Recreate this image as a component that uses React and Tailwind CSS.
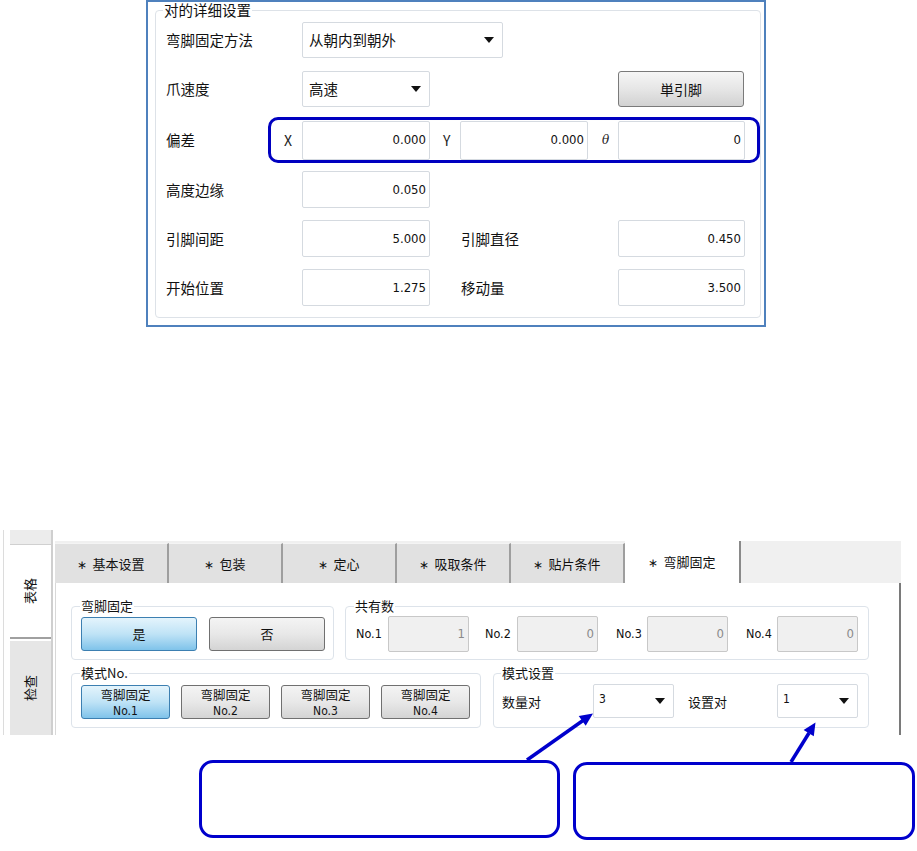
import React from 'react';

const cjk = "font-['Noto_Sans_CJK_SC',sans-serif]";
const num = "font-['DejaVu_Sans_Condensed','Liberation_Sans_Narrow',sans-serif]";

const Caret = () => (
    <svg width="10" height="6" viewBox="0 0 10 6"><path d="M0 0h10L5 6z" fill="#111" /></svg>
);

const NumBox = ({ value, w = 'w-[128px]', h = 'h-[37px]' }) => (
    <div className={`${w} ${h} bg-white border border-[#d5dae0] rounded-[2px] flex items-center justify-end pr-[3px] text-[13px] text-[#111] ${num}`}>
        {value}
    </div>
);

const Select = ({ value, w }) => (
    <div className={`${w} h-[36px] bg-white border border-[#d5dae0] rounded-[2px] flex items-center justify-between pl-[6px] pr-[8px] text-[14.5px] text-[#111]`}>
        <span>{value}</span>
        <Caret />
    </div>
);

const Label = ({ children, w }) => (
    <div className={`${w} shrink-0 text-[14.5px] text-[#111]`}>{children}</div>
);

const DetailPanel = () => (
    <div className={`ml-[146px] w-[620px] h-[327px] border-2 border-[#4f81bd] pl-[7px] pr-[8px] ${cjk}`}>
        <fieldset className="h-[316px] border border-[#dde2e8] rounded-[4px] pl-[7px]">
            <legend className="px-[1px] text-[14.5px] leading-[16px] text-[#111]">对的详细设置</legend>
            <div className="pl-[3px] flex flex-col">
                <div className="mt-[4px] flex items-center">
                    <Label w="w-[136px]">弯脚固定方法</Label>
                    <Select value="从朝内到朝外" w="w-[201px]" />
                </div>
                <div className="mt-[13px] flex items-center">
                    <Label w="w-[136px]">爪速度</Label>
                    <Select value="高速" w="w-[128px]" />
                    <button className="ml-[188px] w-[126px] h-[36px] rounded-[3px] border border-[#7a7a7a] bg-linear-to-b from-[#f6f6f6] via-[#e6e6e6] to-[#d2d2d2] text-[14px] text-[#111]">単引脚</button>
                </div>
                <div className="mt-[10px] flex items-center">
                    <Label w="w-[102px]">偏差</Label>
                    <div className="w-[492px] h-[46px] border-[3px] border-[#0000c0] rounded-[10px] flex items-center pl-[13px] text-[14px] text-[#222]">
                        <span className="w-[18px]">X</span>
                        <NumBox value="0.000" h="h-[39px]" />
                        <span className="ml-[13px] w-[17px]">Y</span>
                        <NumBox value="0.000" h="h-[39px]" />
                        <span className="ml-[14px] w-[16px] italic font-['DejaVu_Serif',serif] text-[12px]">θ</span>
                        <NumBox value="0" w="w-[127px]" h="h-[39px]" />
                    </div>
                </div>
                <div className="mt-[8px] flex items-center">
                    <Label w="w-[136px]">高度边缘</Label>
                    <NumBox value="0.050" />
                </div>
                <div className="mt-[12px] flex items-center">
                    <Label w="w-[136px]">引脚间距</Label>
                    <NumBox value="5.000" />
                    <div className="ml-[31px] w-[157px] text-[14.5px] text-[#111]">引脚直径</div>
                    <NumBox value="0.450" w="w-[127px]" />
                </div>
                <div className="mt-[12px] flex items-center">
                    <Label w="w-[136px]">开始位置</Label>
                    <NumBox value="1.275" />
                    <div className="ml-[31px] w-[157px] text-[14.5px] text-[#111]">移动量</div>
                    <NumBox value="3.500" w="w-[127px]" />
                </div>
            </div>
        </fieldset>
    </div>
);

const tabs = ['基本设置', '包装', '定心', '吸取条件', '贴片条件'];

const WinButton = ({ active, w, h, children }) => (
    <div className={`${w} ${h} shrink-0 rounded-[3px] border flex flex-col items-center justify-center leading-[16px] text-[13px] text-[#111] ${active ? 'border-[#3c7fb1] bg-linear-to-b from-[#e4f4fc] via-[#bfe3f6] to-[#7fc3ea]' : 'border-[#707070] bg-linear-to-b from-[#f4f4f4] via-[#e8e8e8] to-[#d4d4d4]'}`}>
        {children}
    </div>
);

const Disabled = ({ value }) => (
    <div className={`w-[81px] h-[36px] shrink-0 bg-[#f0f0f0] border border-[#c8c8c8] rounded-[2px] flex items-center justify-end pr-[3px] text-[13px] text-[#8a8a8a] ${num}`}>{value}</div>
);

const SmallSelect = ({ value }) => (
    <div className="w-[81px] h-[34px] shrink-0 bg-white border border-[#d5dae0] rounded-[2px] flex items-start justify-between pl-[5px] pr-[8px] pt-[5px]">
        <span className={`text-[12px] text-[#111] ${num}`}>{value}</span>
        <span className="mt-[8px]"><Caret /></span>
    </div>
);

const Group = ({ title, w, h, pl = 'pl-[8px]', children }) => (
    <fieldset className={`${w} ${h} shrink-0 border border-[#dde3ea] rounded-[4px] ${pl}`}>
        <legend className="px-[1px] text-[13px] leading-[16px] text-[#111]">{title}</legend>
        {children}
    </fieldset>
);

const BendScreen = () => (
    <div className={`mt-[203px] h-[205px] overflow-hidden flex ${cjk}`}>
        <div className="w-[3px] shrink-0" />
        <div className="w-px shrink-0 bg-[#dcdcdc]" />
        <div className="w-[6px] shrink-0" />
        <div className="w-[43px] shrink-0 flex flex-col border-r-2 border-[#cfcfcf]">
            <div className="h-[18px] bg-[#ececec] border-b border-[#d0d0d0]" />
            <div className="h-[114px] bg-white border-b-2 border-[#a0a0a0] flex items-center justify-center">
                <span className="-rotate-90 whitespace-nowrap text-[13px] leading-[14px] text-[#111]">表格</span>
            </div>
            <div className="h-[114px] mt-[2px] bg-[#e6e6e6] flex items-center justify-center">
                <span className="-rotate-90 whitespace-nowrap text-[13px] leading-[14px] text-[#111]">检查</span>
            </div>
        </div>
        <div className="w-[2px] shrink-0" />
        <div className="w-[846px] shrink-0 flex flex-col">
            <div className="mt-[11px] h-[42px] bg-[#f0f0f0] flex items-end">
                {tabs.map((t) => (
                    <div key={t} className="w-[114px] h-[40px] shrink-0 bg-[#e1e1e1] border-t border-[#f4f4f4] border-r-2 border-r-[#9e9e9e] flex items-center justify-center text-[13px] text-[#111]">
                        <span className="mr-[5px] text-[12px]">∗</span>{t}
                    </div>
                ))}
                <div className="w-[116px] h-[42px] shrink-0 bg-white border-r-2 border-[#8a8a8a] flex items-center justify-center text-[13px] text-[#111]">
                    <span className="mr-[5px] text-[12px]">∗</span>弯脚固定
                </div>
            </div>
            <div className="flex-1 bg-white border-l border-[#d8d8d8] border-r-2 border-r-[#7a7a7a] pl-[15px]">
                <div className="mt-[15px] flex">
                    <Group title="弯脚固定" w="w-[263px]" h="h-[62px]">
                        <div className="mt-[3px] pl-[1px] flex gap-[12px]">
                            <WinButton active w="w-[116px]" h="h-[34px]">是</WinButton>
                            <WinButton w="w-[116px]" h="h-[34px]">否</WinButton>
                        </div>
                    </Group>
                    <div className="w-[11px] shrink-0" />
                    <Group title="共有数" w="w-[524px]" h="h-[62px]">
                        <div className="mt-[2px] pl-[2px] flex items-center text-[13px] text-[#111]">
                            <span className={`w-[32px] shrink-0 ${num} text-[12.5px]`}>No.1</span>
                            <Disabled value="1" />
                            <span className={`ml-[16px] w-[32px] shrink-0 ${num} text-[12.5px]`}>No.2</span>
                            <Disabled value="0" />
                            <span className={`ml-[18px] w-[31px] shrink-0 ${num} text-[12.5px]`}>No.3</span>
                            <Disabled value="0" />
                            <span className={`ml-[18px] w-[31px] shrink-0 ${num} text-[12.5px]`}>No.4</span>
                            <Disabled value="0" />
                        </div>
                    </Group>
                </div>
                <div className="mt-[5px] flex">
                    <Group title="模式No." w="w-[410px]" h="h-[63px]">
                        <div className="mt-[4px] pl-[1px] flex gap-[11px]">
                            {[1, 2, 3, 4].map((n) => (
                                <WinButton key={n} active={n === 1} w="w-[89px]" h="h-[34px]">
                                    <span className="text-[12.5px] leading-[18px]">弯脚固定</span>
                                    <span className={`${num} text-[12px] leading-[14px]`}>No.{n}</span>
                                </WinButton>
                            ))}
                        </div>
                    </Group>
                    <div className="w-[12px] shrink-0" />
                    <Group title="模式设置" w="w-[376px]" h="h-[63px]" pl="pl-[7px]">
                        <div className="mt-[3px] pl-[1px] flex items-center text-[13px] text-[#111]">
                            <span className="w-[91px] shrink-0 mt-[2px]">数量对</span>
                            <SmallSelect value="3" />
                            <span className="ml-[14px] w-[89px] shrink-0 mt-[2px]">设置对</span>
                            <SmallSelect value="1" />
                        </div>
                    </Group>
                </div>
            </div>
        </div>
    </div>
);

const Arrows = () => (
    <svg className="absolute left-0 top-0 pointer-events-none" width="917" height="851" viewBox="0 0 917 851">
        <line x1="527" y1="760" x2="583" y2="720.5" stroke="#0000cc" strokeWidth="3.5" />
        <polygon points="593,713.5 585.7,725.8 578.7,716" fill="#0000cc" />
        <line x1="791" y1="762" x2="809" y2="733" stroke="#0000cc" strokeWidth="3.5" />
        <polygon points="815.5,722.5 813.8,736.3 803.6,730.1" fill="#0000cc" />
    </svg>
);

export default function App() {
    return (
        <div className="relative w-[917px] h-[851px] bg-white overflow-hidden">
            <DetailPanel />
            <BendScreen />
            <div className="flex items-start">
                <div className="ml-[199px] mt-[25px] w-[361px] h-[78px] border-[3px] border-[#0000cc] rounded-[14px]" />
                <div className="ml-[13px] mt-[27px] w-[342px] h-[78px] border-[3px] border-[#0000cc] rounded-[14px]" />
            </div>
            <Arrows />
        </div>
    );
}
